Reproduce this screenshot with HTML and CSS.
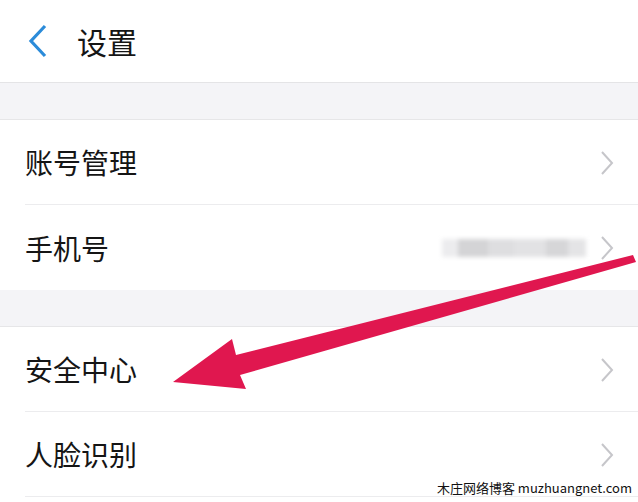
FILE: index.html
```html
<!DOCTYPE html>
<html>
<head>
	<meta charset="UTF-8">
	<meta name="viewport" content="width=device-width, initial-scale=1.0">
	<title>设置</title>
<link rel="stylesheet" href="styles.css">
</head>
<body>
	<div class="page">
	<div class="header">
		<svg class="back" width="22" height="34" viewBox="0 0 22 34"><polyline points="18,2 4,17 18,32" fill="none" stroke="#2b8bd9" stroke-width="3.2"/></svg>
		<h1>设置</h1>
	</div>

	<div class="gap"></div>
	<div class="group">
		<div class="row">
			<span class="label">账号管理</span>
			<svg class="chev" width="14" height="26" viewBox="0 0 14 26"><polyline points="2,2 12,13 2,24" fill="none" stroke="#c6c6ca" stroke-width="2"/></svg>
		</div>
		<div class="row">
			<span class="label">手机号</span>
			<div class="blur">
				<i class="b1"></i><i class="b2"></i><i class="b3"></i><i class="b4"></i><i class="b5"></i><i class="b6"></i>
			</div>
			<svg class="chev" width="14" height="26" viewBox="0 0 14 26"><polyline points="2,2 12,13 2,24" fill="none" stroke="#c6c6ca" stroke-width="2"/></svg>
		</div>
	</div>

	<div class="gap"></div>
	<div class="group last">
		<div class="row">
			<span class="label">安全中心</span>
			<svg class="chev" width="14" height="26" viewBox="0 0 14 26"><polyline points="2,2 12,13 2,24" fill="none" stroke="#c6c6ca" stroke-width="2"/></svg>
		</div>
		<div class="row">
			<span class="label">人脸识别</span>
			<svg class="chev" width="14" height="26" viewBox="0 0 14 26"><polyline points="2,2 12,13 2,24" fill="none" stroke="#c6c6ca" stroke-width="2"/></svg>
		</div>
	</div>

	<!-- red pointer drawn over the list -->
	<svg class="arrow" width="638" height="502" viewBox="0 0 638 502">
		<polygon points="173,382 232,339 236,355 633,255 636,262 240,375 246,389" fill="#e0174f"/>
	</svg>

	<div class="mark">木庄网络博客 muzhuangnet.com</div>
	</div>
</body>
</html>
```

FILE: styles.css
```css
body {
	margin: 0;
	background: #ffffff;
	font-family: "Noto Sans CJK SC", "Noto Sans", sans-serif;
	color: #151515;
}
.page {
	position: relative;
	width: 638px;
	height: 502px;
	overflow: hidden;
}
.header {
	height: 83px;
	display: flex;
	align-items: center;
	box-sizing: border-box;
	padding-left: 27px;
	border-bottom: 1px solid #e4e4e6;
}
.back {
	margin-right: 28px;
}
h1 {
	margin: 0;
	font-size: 30px;
	font-weight: normal;
	line-height: 1;
}
.gap {
	height: 36px;
	background: #f4f4f7;
	border-bottom: 1px solid #e6e6e8;
}
.group {
	padding-left: 25px;
}
.row {
	height: 85px;
	box-sizing: border-box;
	display: flex;
	align-items: center;
	padding-right: 24px;
	border-bottom: 1px solid #ececee;
}
.group .row:last-child {
	border-bottom: none;
}
.group.last .row:last-child {
	border-bottom: 1px solid #ececee;
}
.label {
	flex: 1;
	font-size: 28px;
	line-height: 1;
}
.chev {
	margin-top: 1px;
}
.blur {
	display: flex;
	align-items: center;
	margin-right: 14px;
	filter: blur(2px);
}
.blur i {
	display: block;
	height: 18px;
	background: #d9d9dc;
}
.blur .b1 { width: 16px; background: #ececee; }
.blur .b2 { width: 30px; background: #d4d4d6; }
.blur .b3 { width: 26px; background: #dedee0; }
.blur .b4 { width: 32px; background: #e2e2e4; }
.blur .b5 { width: 22px; background: #d6d6d8; }
.blur .b6 { width: 18px; background: #e4e4e6; }
.arrow {
	position: absolute;
	left: 0;
	top: 0;
}
.mark {
	position: absolute;
	right: 5px;
	bottom: 6px;
	padding: 0 1px;
	background: #ffffff;
	font-family: "Noto Sans CJK SC", "DejaVu Sans", sans-serif;
	font-size: 13px;
	line-height: 16px;
	color: #111111;
}
```
